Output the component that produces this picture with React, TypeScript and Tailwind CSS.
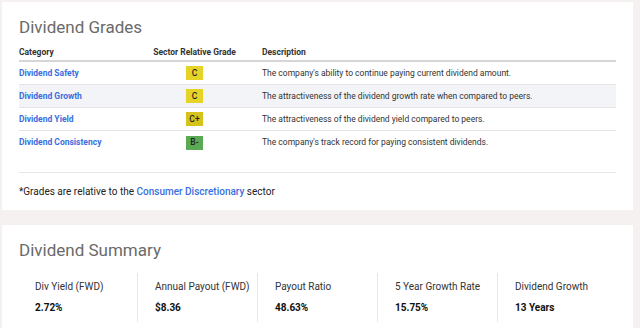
import React from "react";

const rows = [
  { cat: "Dividend Safety", grade: "C", color: "bg-[#e6d327]", desc: "The company's ability to continue paying current dividend amount." },
  { cat: "Dividend Growth", grade: "C", color: "bg-[#e6d327]", desc: "The attractiveness of the dividend growth rate when compared to peers." },
  { cat: "Dividend Yield", grade: "C+", color: "bg-[#d5c31c]", desc: "The attractiveness of the dividend yield compared to peers." },
  { cat: "Dividend Consistency", grade: "B-", color: "bg-[#5aaa55]", desc: "The company's track record for paying consistent dividends." },
];

const metrics = [
  { label: "Div Yield (FWD)", value: "2.72%" },
  { label: "Annual Payout (FWD)", value: "$8.36" },
  { label: "Payout Ratio", value: "48.63%" },
  { label: "5 Year Growth Rate", value: "15.75%" },
  { label: "Dividend Growth", value: "13 Years" },
];

export default function App() {
  return (
    <div
      className="w-[640px] h-[328px] overflow-hidden bg-[#f4f1f0] pt-[2px] pl-[2px] pr-[7px]"
      style={{ fontFamily: "Roboto, 'Liberation Sans', sans-serif" }}
    >
      <div className="bg-white h-[208px] px-[17px] pt-[14px]">
        <div className="text-[17px] leading-[22px] text-[#6a6a6a]">Dividend Grades</div>
        <div className="mt-[6px]">
          <div className="grid grid-cols-[134px_83px_1fr] h-[18px] items-center border-b-2 border-[#d6d6d6] text-[8.5px] font-bold text-[#333333]">
            <div>Category</div>
            <div className="text-center whitespace-nowrap">Sector Relative Grade</div>
            <div className="pl-[26px]">Description</div>
          </div>
          {rows.map((r, i) => (
            <div
              key={r.cat}
              className={
                "grid grid-cols-[134px_83px_1fr] h-[23px] items-center text-[8.5px] " +
                (i < 3 ? "border-b border-[#e4e4e4] " : "") +
                (i === 1 ? "bg-[#f3f4f7]" : "")
              }
            >
              <div className="font-bold text-[#3a6ede]">{r.cat}</div>
              <div className="flex justify-center">
                <span className={"w-[17px] h-[14px] flex items-center justify-center text-[8.5px] font-medium text-[#222] " + r.color}>
                  {r.grade}
                </span>
              </div>
              <div className="pl-[26px] text-[#333333] whitespace-nowrap">{r.desc}</div>
            </div>
          ))}
        </div>
        <div className="mt-[18px] border-t border-[#e6e6e6]" />
        <div className="mt-[12px] text-[10px] leading-[14px] text-[#222222]">
          *Grades are relative to the <span className="font-medium text-[#3a6ede]">Consumer Discretionary</span> sector
        </div>
      </div>
      <div className="mt-[15px] bg-white h-[110px] pl-[16px] pt-[14px]">
        <div className="text-[17px] leading-[22px] text-[#6a6a6a] pl-[1px]">Dividend Summary</div>
        <div className="mt-[12px] flex">
          {metrics.map((m, i) => (
            <div
              key={m.label}
              className={"w-[120px] h-[49px] pl-[17px] pt-[7px] " + (i < 4 ? "border-r border-[#e8e8e8]" : "")}
            >
              <div className="text-[10px] leading-[14px] text-[#333333] whitespace-nowrap">{m.label}</div>
              <div className="mt-[7px] text-[10px] leading-[14px] font-bold text-[#111111]">{m.value}</div>
            </div>
          ))}
        </div>
      </div>
    </div>
  );
}
